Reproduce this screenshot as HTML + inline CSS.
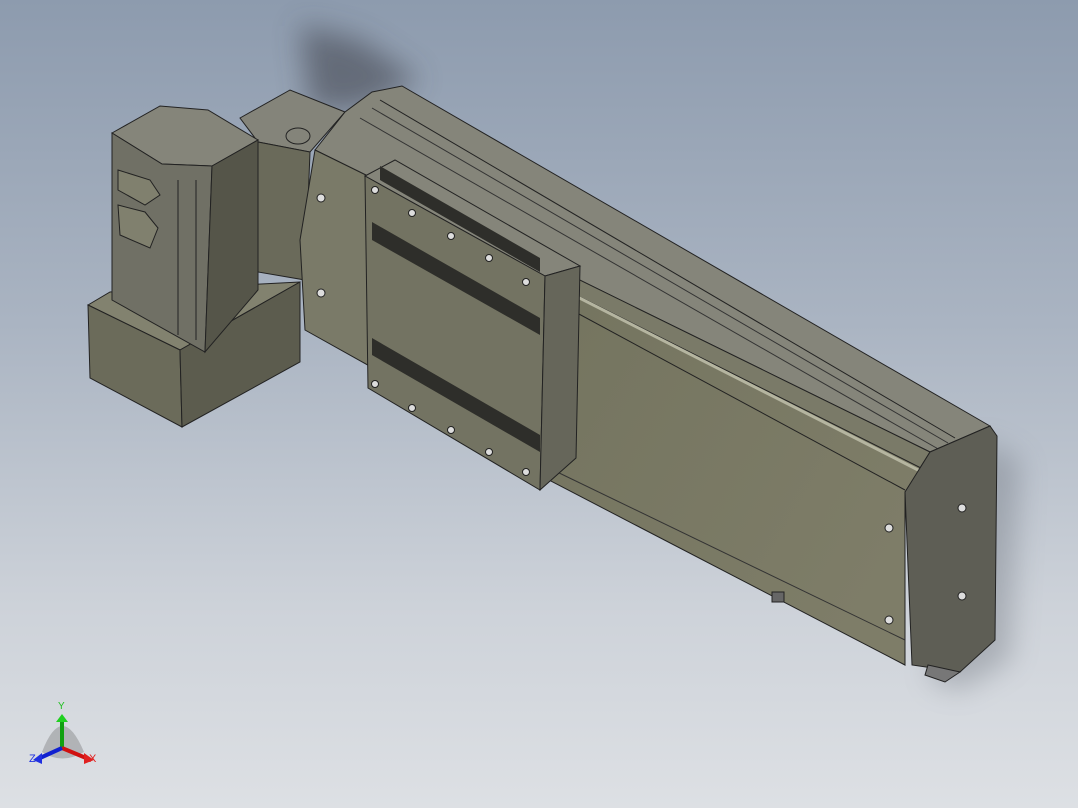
<!DOCTYPE html>
<html><head><style>
html,body{margin:0;padding:0;width:1078px;height:808px;overflow:hidden}
body{background:linear-gradient(180deg,#8d9bae 0%,#aab4c2 40%,#cdd2d9 75%,#dde0e4 100%)}
svg{position:absolute;left:0;top:0}
</style></head><body>
<svg width="1078" height="808" viewBox="0 0 1078 808">
<defs>
<filter id="b" x="-50%" y="-50%" width="200%" height="200%"><feGaussianBlur stdDeviation="14"/></filter>
<linearGradient id="fr" x1="0" y1="0" x2="1" y2="0.6"><stop offset="0" stop-color="#74745f"/><stop offset="1" stop-color="#7e7d68"/></linearGradient>
</defs>
<polygon points="300,25 360,40 420,80 360,110 310,110" fill="#3c4048" opacity="0.55" filter="url(#b)"/>
<polygon points="980,440 1020,460 1010,660 960,690 930,680" fill="#606670" opacity="0.35" filter="url(#b)"/>
<polygon points="240,118 290,90 345,112 310,152 258,142" fill="#84847a" stroke="#222" stroke-width="1"/>
<ellipse cx="298" cy="136" rx="12" ry="8" fill="#84847a" stroke="#222"/>
<polygon points="258,142 310,152 305,280 258,272" fill="#6a6a5a" stroke="#222"/>
<polygon points="88,305 110,292 300,282 180,350" fill="#82826f" stroke="#222"/>
<polygon points="88,305 180,350 182,427 90,378" fill="#6b6b5a" stroke="#222"/>
<polygon points="180,350 300,282 300,362 182,427" fill="#5c5c4e" stroke="#222"/>
<polygon points="112,133 160,106 208,110 258,140 212,166 162,164" fill="#85857a" stroke="#222"/>
<polygon points="112,133 162,164 212,166 205,352 112,300" fill="#707065" stroke="#222"/>
<polygon points="212,166 258,140 258,290 205,352" fill="#555549" stroke="#222"/>
<polygon points="118,170 150,180 160,195 145,205 118,190" fill="#80806e" stroke="#222"/>
<polygon points="118,205 145,212 158,228 150,248 120,235" fill="#80806e" stroke="#222"/>
<line x1="178" y1="180" x2="178" y2="335" stroke="#222"/>
<line x1="196" y1="180" x2="196" y2="340" stroke="#222"/>
<polygon points="315,150 345,112 372,92 402,86 990,426 930,452" fill="#85857a" stroke="#222"/>
<line x1="380" y1="100" x2="955" y2="438" stroke="#222"/>
<line x1="372" y1="108" x2="948" y2="443" stroke="#333"/>
<line x1="360" y1="118" x2="940" y2="450" stroke="#333"/>
<polygon points="315,150 930,452 905,492 905,665 305,330 300,240" fill="#7a7a68" stroke="#222"/>
<polygon points="550,282 925,470 905,492 905,665 545,478" fill="url(#fr)" stroke="#222"/>
<line x1="552" y1="284" x2="922" y2="472" stroke="#b5b5a0" stroke-width="3"/>
<line x1="553" y1="300" x2="905" y2="490" stroke="#222"/>
<line x1="553" y1="470" x2="905" y2="640" stroke="#333"/>
<polygon points="930,452 990,426 997,436 995,640 960,672 912,665 905,492" fill="#5e5e55" stroke="#222"/>
<polygon points="928,665 960,672 945,682 925,675" fill="#777" stroke="#222"/>
<circle cx="962" cy="508" r="4" fill="#ddd" stroke="#222"/>
<circle cx="962" cy="596" r="4" fill="#ddd" stroke="#222"/>
<circle cx="889" cy="528" r="4" fill="#ddd" stroke="#222"/>
<circle cx="889" cy="620" r="4" fill="#ddd" stroke="#222"/>
<circle cx="321" cy="198" r="4" fill="#ddd" stroke="#222"/>
<circle cx="321" cy="293" r="4" fill="#ddd" stroke="#222"/>
<rect x="772" y="592" width="12" height="10" fill="#666" stroke="#222"/>
<polygon points="365,176 395,160 580,266 545,276" fill="#85857a" stroke="#222"/>
<polygon points="365,176 545,276 540,490 368,388" fill="#737362" stroke="#222"/>
<polygon points="545,276 580,266 576,458 540,490" fill="#66665a" stroke="#222"/>
<polygon points="380,166 540,258 540,272 380,180" fill="#2e2e2a"/>
<polygon points="372,222 540,318 540,335 372,240" fill="#2e2e2a"/>
<polygon points="372,338 540,435 540,452 372,355" fill="#2e2e2a"/>
<circle cx="375" cy="190" r="3.5" fill="#ddd" stroke="#222"/>
<circle cx="412" cy="213" r="3.5" fill="#ddd" stroke="#222"/>
<circle cx="451" cy="236" r="3.5" fill="#ddd" stroke="#222"/>
<circle cx="489" cy="258" r="3.5" fill="#ddd" stroke="#222"/>
<circle cx="526" cy="282" r="3.5" fill="#ddd" stroke="#222"/>
<circle cx="375" cy="384" r="3.5" fill="#ddd" stroke="#222"/>
<circle cx="412" cy="408" r="3.5" fill="#ddd" stroke="#222"/>
<circle cx="451" cy="430" r="3.5" fill="#ddd" stroke="#222"/>
<circle cx="489" cy="452" r="3.5" fill="#ddd" stroke="#222"/>
<circle cx="526" cy="472" r="3.5" fill="#ddd" stroke="#222"/>
<path d="M42,752 Q62,700 84,752 Q62,765 42,752Z" fill="#555" opacity="0.3"/>
<line x1="62" y1="748" x2="62" y2="722" stroke="#10a010" stroke-width="4"/>
<polygon points="56,722 62,714 68,722" fill="#20d020"/>
<line x1="62" y1="748" x2="86" y2="758" stroke="#d01010" stroke-width="4"/>
<polygon points="84,753 94,760 84,764" fill="#e02020"/>
<line x1="62" y1="748" x2="40" y2="758" stroke="#1020d0" stroke-width="4"/>
<polygon points="42,753 33,760 42,764" fill="#2030e0"/>
<text x="58" y="709" font-family="Liberation Sans,sans-serif" font-size="10" fill="#20c020">Y</text>
<text x="89" y="762" font-family="Liberation Sans,sans-serif" font-size="11" fill="#e02020">X</text>
<text x="29" y="762" font-family="Liberation Sans,sans-serif" font-size="11" fill="#2030e0">Z</text>
</svg>
</body></html>
